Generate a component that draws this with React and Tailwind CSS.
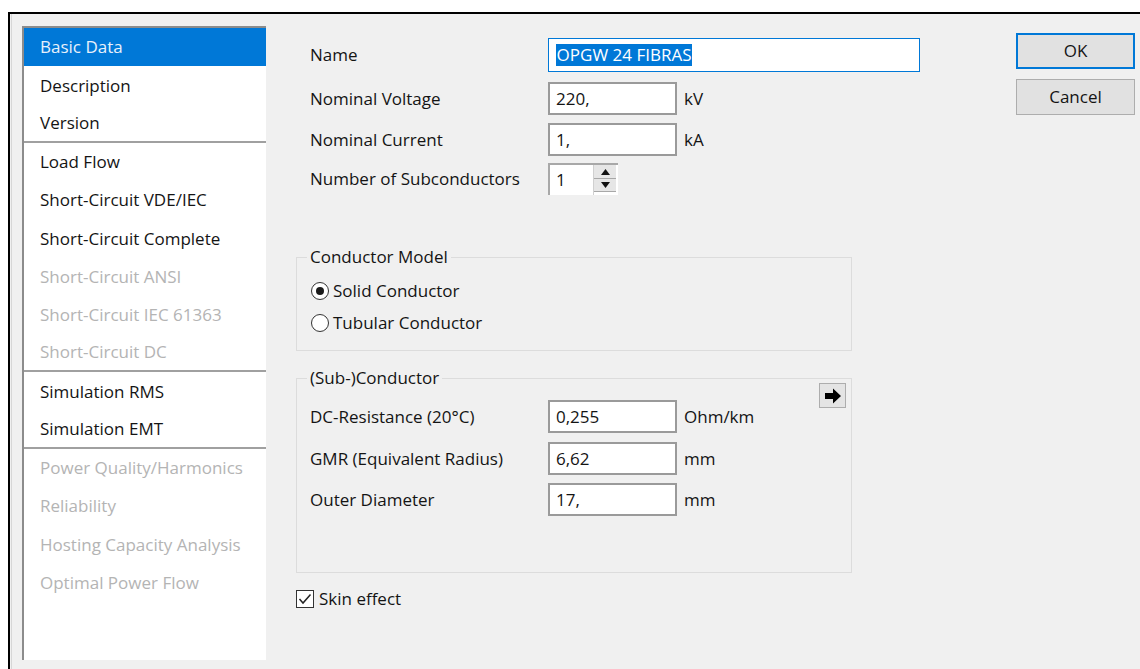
import React from "react";

const pages = [
  { label: "Basic Data", selected: true },
  { label: "Description" },
  { label: "Version", sep: true },
  { label: "Load Flow" },
  { label: "Short-Circuit VDE/IEC" },
  { label: "Short-Circuit Complete" },
  { label: "Short-Circuit ANSI", disabled: true },
  { label: "Short-Circuit IEC 61363", disabled: true },
  { label: "Short-Circuit DC", disabled: true, sep: true },
  { label: "Simulation RMS" },
  { label: "Simulation EMT", sep: true },
  { label: "Power Quality/Harmonics", disabled: true },
  { label: "Reliability", disabled: true },
  { label: "Hosting Capacity Analysis", disabled: true },
  { label: "Optimal Power Flow", disabled: true },
];

function PageList() {
  return (
    <div className="ml-[10px] mt-[12px] w-[244px] h-[634px] border-t-2 border-l-2 border-[#8c8c8c] bg-white">
      {pages.map((p) => (
        <div
          key={p.label}
          className={`h-[38.25px] flex items-center pl-[16px] whitespace-nowrap ${
            p.selected ? "bg-[#0078d7] text-[#e8f1fb]" : p.disabled ? "text-[#b4b4b4]" : "text-[#141414]"
          } ${p.sep ? "border-b-2 border-[#a0a0a0]" : ""}`}
        >
          {p.label}
        </div>
      ))}
    </div>
  );
}

function TextBox({ value, unit }) {
  return (
    <>
      <div className="w-[129px] h-[33px] border-2 border-[#9a9a9a] bg-white flex items-center pl-[6px] text-[#141414]">
        {value}
      </div>
      {unit && <span className="ml-[7px] text-[#141414]">{unit}</span>}
    </>
  );
}

function Spinner({ value }) {
  return (
    <div className="w-[70px] h-[32px] flex border-t-2 border-l-2 border-[#a8a8a8] bg-white">
      <div className="flex-1 pl-[6px] flex items-center text-[#141414]">{value}</div>
      <div className="w-[23px] flex flex-col mr-[2px] border-l border-[#d0d0d0]">
        <div className="h-[14px] bg-[#e6e6e6] border-b border-[#a8a8a8] flex items-center justify-center">
          <svg width="9" height="6" viewBox="0 0 9 6">
            <polygon points="4.5,0 9,6 0,6" fill="#111" />
          </svg>
        </div>
        <div className="h-[13px] bg-[#e6e6e6] border-b border-[#a8a8a8] flex items-center justify-center">
          <svg width="9" height="6" viewBox="0 0 9 6">
            <polygon points="0,0 9,0 4.5,6" fill="#111" />
          </svg>
        </div>
      </div>
    </div>
  );
}

function Radio({ checked, label }) {
  return (
    <div className="h-[32px] flex items-center pl-[14px]">
      <span className="w-[18px] h-[18px] rounded-full border border-[#333] bg-white flex items-center justify-center">
        {checked && <span className="w-[8px] h-[8px] rounded-full bg-[#1a1a1a]" />}
      </span>
      <span className="ml-[4px] text-[#141414]">{label}</span>
    </div>
  );
}

function Row({ label, children, className = "" }) {
  return (
    <div className={`flex items-center ${className}`}>
      <span className="w-[238px] text-[#141414] whitespace-nowrap">{label}</span>
      {children}
    </div>
  );
}

export default function App() {
  return (
    <div
      className="w-[1140px] h-[669px] bg-white pt-[12px] pl-[8px] overflow-hidden text-[17px]"
      style={{ fontFamily: '"Open Sans", "Noto Sans", sans-serif' }}
    >
      <div className="h-full border-t-2 border-l-2 border-black bg-[#f0f0f0] flex">
        <div className="w-px ml-px bg-[#d6d6d6]" />
        <PageList />

        {/* form */}
        <div className="ml-[30px] w-[624px] flex flex-col">
          <Row label="Name" className="mt-[24px] h-[34px] pl-[14px]">
            <div className="w-[373px] h-[34px] border border-[#0078d7] bg-white flex items-center pl-[7px]">
              <span className="bg-[#0078d7] text-white h-[22px] leading-[22px] px-px">OPGW 24 FIBRAS</span>
            </div>
          </Row>
          <Row label="Nominal Voltage" className="mt-[10px] h-[33px] pl-[14px]">
            <TextBox value="220," unit="kV" />
          </Row>
          <Row label="Nominal Current" className="mt-[8px] h-[33px] pl-[14px]">
            <TextBox value="1," unit="kA" />
          </Row>
          <Row label="Number of Subconductors" className="mt-[7px] h-[32px] pl-[14px]">
            <Spinner value="1" />
          </Row>

          <fieldset className="mt-[50px] w-[556px] border border-[#dcdcdc] pb-[11px]">
            <legend className="ml-[10px] px-[3px] leading-[24px] text-[#141414]">Conductor Model</legend>
            <div className="mt-[6px]">
              <Radio checked label="Solid Conductor" />
              <Radio label="Tubular Conductor" />
            </div>
          </fieldset>

          <fieldset className="relative mt-[15px] w-[556px] border border-[#dcdcdc] pb-[56px] pl-[13px]">
            <legend className="-ml-[3px] px-[3px] leading-[24px] text-[#141414]">(Sub-)Conductor</legend>
            <button className="absolute right-[5px] top-[-7px] w-[27px] h-[25px] bg-[#e4e4e4] border border-[#adadad] flex items-center justify-center">
              <svg width="18" height="16" viewBox="0 0 18 16">
                <polygon points="1,5 9,5 9,0.5 17,8 9,15.5 9,11 1,11" fill="#000" />
              </svg>
            </button>
            <Row label="DC-Resistance (20°C)" className="mt-[10px] h-[33px]">
              <TextBox value="0,255" unit="Ohm/km" />
            </Row>
            <Row label="GMR (Equivalent Radius)" className="mt-[9px] h-[33px]">
              <TextBox value="6,62" unit="mm" />
            </Row>
            <Row label="Outer Diameter" className="mt-[8px] h-[33px]">
              <TextBox value="17," unit="mm" />
            </Row>
          </fieldset>

          <label className="mt-[16px] h-[20px] flex items-center">
            <span className="w-[18px] h-[18px] border border-[#333] bg-white flex items-center justify-center">
              <svg width="14" height="12" viewBox="0 0 14 12">
                <polyline points="1.5,6 5,10 12.5,1.5" fill="none" stroke="#222" strokeWidth="1.5" />
              </svg>
            </span>
            <span className="ml-[5px] text-[#141414]">Skin effect</span>
          </label>
        </div>

        {/* dialog buttons */}
        <div className="ml-[96px] mt-[19px] w-[119px] flex flex-col">
          <button className="h-[36px] border-2 border-[#0078d7] bg-[#e1e1e1] text-[#141414]">OK</button>
          <button className="mt-[10px] h-[36px] border border-[#adadad] bg-[#e1e1e1] text-[#141414]">Cancel</button>
        </div>
      </div>
    </div>
  );
}
